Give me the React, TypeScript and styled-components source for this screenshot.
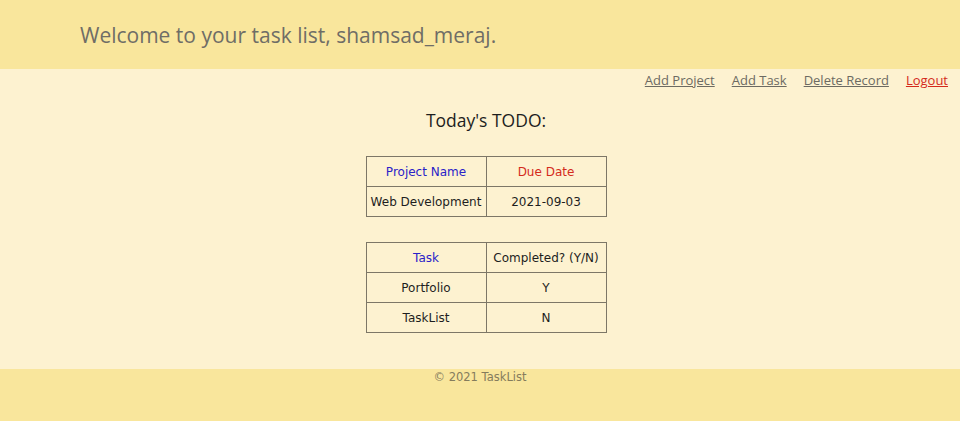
import React from "react";
import styled, { createGlobalStyle } from "styled-components";

const GlobalStyle = createGlobalStyle`
  html, body {
    margin: 0;
    padding: 0;
    background: #f9e69c;
  }
`;

const Header = styled.header`
  height: 69px;
  background: #f9e69c;
  display: flex;
  align-items: center;
  padding-left: 80px;
`;

const Welcome = styled.h1`
  margin: 0;
  font-family: "Open Sans", "Noto Sans", sans-serif;
  font-weight: 400;
  font-size: 21px;
  color: #6f6d66;
`;

const Main = styled.main`
  background: #fdf2d0;
  height: 300px;
  display: flex;
  flex-direction: column;
  align-items: center;
  padding-left: 12px;
`;

const Nav = styled.nav`
  align-self: flex-end;
  display: flex;
  gap: 17px;
  padding: 1px 12px 0 0;
  height: 20px;
  align-items: center;
`;

const NavLink = styled.a<{ $danger?: boolean }>`
  font-family: "Open Sans", "Noto Sans", sans-serif;
  font-size: 13px;
  color: ${(p) => (p.$danger ? "#d42a1c" : "#6c6a62")};
  text-decoration: underline;
  cursor: pointer;
`;

const Title = styled.h2`
  margin: 19px 0 25px;
  font-family: "Open Sans", "Noto Sans", sans-serif;
  font-weight: 400;
  font-size: 17.5px;
  color: #1e1e1e;
  line-height: 22px;
`;

const Table = styled.table`
  border-collapse: collapse;
  margin-bottom: 25px;
  font-family: "DejaVu Sans", Verdana, sans-serif;
  font-size: 12px;
  color: #1e1e1e;
`;

const Cell = styled.td<{ $color?: string }>`
  border: 1px solid #7d7767;
  width: 119px;
  height: 29px;
  padding: 0;
  text-align: center;
  color: ${(p) => p.$color ?? "#1e1e1e"};
`;

const Footer = styled.footer`
  background: #f9e69c;
  height: 52px;
  text-align: center;
  padding-top: 1px;
  font-family: "DejaVu Sans", Verdana, sans-serif;
  font-size: 11.5px;
  color: #857c5c;
  line-height: 14px;
`;

const tasks = [
  { name: "Portfolio", done: "Y" },
  { name: "TaskList", done: "N" },
];

export default function App() {
  return (
    <>
      <GlobalStyle />
      <Header>
        <Welcome>Welcome to your task list, shamsad_meraj.</Welcome>
      </Header>
      <Main>
        <Nav>
          <NavLink>Add Project</NavLink>
          <NavLink>Add Task</NavLink>
          <NavLink>Delete Record</NavLink>
          <NavLink $danger>Logout</NavLink>
        </Nav>
        <Title>Today's TODO:</Title>
        <Table>
          <tbody>
            <tr>
              <Cell $color="#2a22c8">Project Name</Cell>
              <Cell $color="#d42a1c">Due Date</Cell>
            </tr>
            <tr>
              <Cell>Web Development</Cell>
              <Cell>2021-09-03</Cell>
            </tr>
          </tbody>
        </Table>
        <Table>
          <tbody>
            <tr>
              <Cell $color="#2a22c8">Task</Cell>
              <Cell>Completed? (Y/N)</Cell>
            </tr>
            {tasks.map((t) => (
              <tr key={t.name}>
                <Cell>{t.name}</Cell>
                <Cell>{t.done}</Cell>
              </tr>
            ))}
          </tbody>
        </Table>
      </Main>
      <Footer>© 2021 TaskList</Footer>
    </>
  );
}
